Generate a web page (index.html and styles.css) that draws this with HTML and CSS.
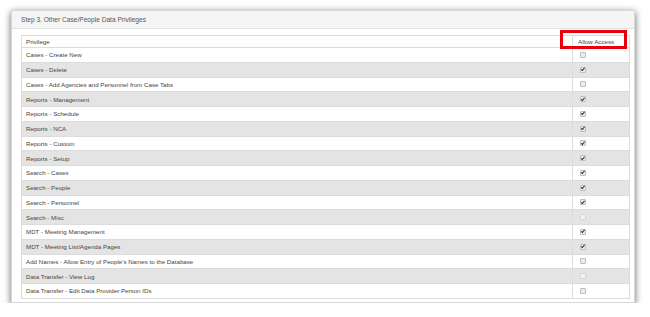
FILE: index.html
```html
<!DOCTYPE html>
<html>
<head>
<meta charset="utf-8">
<link rel="stylesheet" href="styles.css">
</head>
<body>
<div class="panel">
  <div class="panel-head">Step 3. Other Case/People Data Privileges</div>
  <div class="panel-body">
    <table class="grid">
      <thead>
        <tr><th class="col-name">Privilege</th><th class="col-allow"><span class="mark"></span>Allow Access</th></tr>
      </thead>
      <tbody>
        <tr><td>Cases - Create New</td><td class="c"><span class="cb"></span></td></tr>
        <tr><td>Cases - Delete</td><td class="c"><span class="cb on"></span></td></tr>
        <tr><td>Cases - Add Agencies and Personnel from Case Tabs</td><td class="c"><span class="cb"></span></td></tr>
        <tr><td>Reports - Management</td><td class="c"><span class="cb on"></span></td></tr>
        <tr><td>Reports - Schedule</td><td class="c"><span class="cb on"></span></td></tr>
        <tr><td>Reports - NCA</td><td class="c"><span class="cb on"></span></td></tr>
        <tr><td>Reports - Custom</td><td class="c"><span class="cb on"></span></td></tr>
        <tr><td>Reports - Setup</td><td class="c"><span class="cb on"></span></td></tr>
        <tr><td>Search - Cases</td><td class="c"><span class="cb on"></span></td></tr>
        <tr><td>Search - People</td><td class="c"><span class="cb on"></span></td></tr>
        <tr><td>Search - Personnel</td><td class="c"><span class="cb on"></span></td></tr>
        <tr><td>Search - Misc</td><td class="c"><span class="cb dis"></span></td></tr>
        <tr><td>MDT - Meeting Management</td><td class="c"><span class="cb on"></span></td></tr>
        <tr><td>MDT - Meeting List/Agenda Pages</td><td class="c"><span class="cb on"></span></td></tr>
        <tr><td>Add Names - Allow Entry of People's Names to the Database</td><td class="c"><span class="cb"></span></td></tr>
        <tr><td>Data Transfer - View Log</td><td class="c"><span class="cb dis"></span></td></tr>
        <tr><td>Data Transfer - Edit Data Provider Person IDs</td><td class="c"><span class="cb"></span></td></tr>
      </tbody>
    </table>
  </div>
</div>
</body>
</html>
```
FILE: styles.css
```css
html, body {
  margin: 0;
  padding: 0;
  background: #fff;
}
body {
  padding: 10px 15px 0 11px;
  font-family: "Liberation Sans", Arial, sans-serif;
  font-size: 6.2px;
  color: #444;
}
.panel {
  width: 624px;
  height: 293px;
  box-sizing: border-box;
  background: #fff;
  border: 1px solid #d8d8d8;
  box-shadow: 0 2px 7px rgba(0, 0, 0, 0.6);
  display: flex;
  flex-direction: column;
}
.panel-head {
  height: 18px;
  box-sizing: border-box;
  background: #f5f5f5;
  border-bottom: 1px solid #e2e2e2;
  padding: 0 0 0 9px;
  display: flex;
  align-items: center;
  color: #555;
  font-size: 6.6px;
}
.panel-body {
  padding: 6px 4px 0 9px;
}
.grid {
  width: 100%;
  border-collapse: collapse;
  border: 1px solid #dcdcdc;
}
.grid th, .grid td {
  text-align: left;
  font-weight: normal;
  padding: 0 0 0 4px;
  border-top: 1px solid #dcdcdc;
  white-space: nowrap;
}
.grid th {
  height: 11px;
}
.grid td {
  height: 13.76px;
}
.grid tbody tr:nth-child(even) td {
  background: #e4e4e4;
}
.col-allow {
  width: 51px;
  border-left: 1px solid #dcdcdc;
  position: relative;
}
.grid th.col-allow {
  padding-left: 5px;
}
.grid td.c {
  border-left: 1px solid #dcdcdc;
  padding-left: 7px;
}
.mark {
  position: absolute;
  left: -13px;
  top: -6px;
  width: 67px;
  height: 19px;
  box-sizing: border-box;
  border: 3px solid #e8000b;
}
.cb {
  display: block;
  width: 4px;
  height: 4px;
  border: 1px solid #bdbdbd;
  border-radius: 1px;
  background: #ececec;
  position: relative;
}
.cb.dis {
  border-color: #d6d6d6;
  background: #f3f3f3;
}
.cb.on::after {
  content: "";
  position: absolute;
  left: 1px;
  top: -0.5px;
  width: 1.2px;
  height: 2.8px;
  border: solid #222;
  border-width: 0 1.2px 1.2px 0;
  transform: rotate(40deg);
}
```
